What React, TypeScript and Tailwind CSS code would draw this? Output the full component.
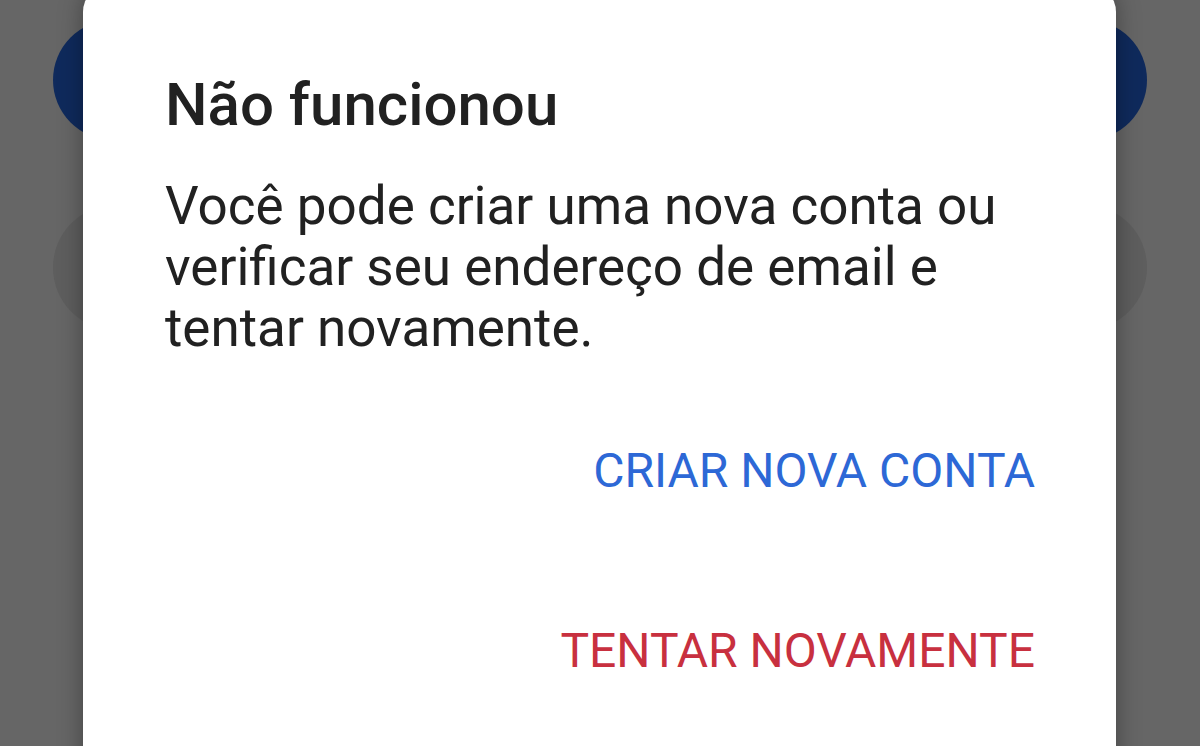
export default function App() {
  return (
    <div
      className="relative h-[746px] w-[1200px] overflow-hidden bg-[#666666]"
      style={{ fontFamily: "Roboto, 'Noto Sans', sans-serif" }}
    >
      {/* page behind the scrim */}
      <div className="flex flex-col gap-[65px] px-[53px] pt-[20px]">
        <div className="h-[120px] rounded-full bg-[#0f2a5c]" />
        <div className="h-[125px] rounded-full bg-[#5e5e5e]" />
      </div>

      {/* dialog */}
      <div className="absolute left-[83px] top-[-16px] flex h-[800px] w-[1033px] flex-col rounded-[28px] bg-white pl-[82px] pr-[81px] pt-[85px] shadow-[0_0_24px_rgba(0,0,0,0.35)]">
        <h2 className="text-[60px] font-medium leading-[72px] text-[#212121]">
          Não funcionou
        </h2>
        <p className="mt-[35px] text-[53px] leading-[61px] text-[#212121]">
          Você pode criar uma nova conta ou verificar seu endereço de email e
          tentar novamente.
        </p>
        <div className="mt-[84px] flex flex-col items-end gap-[124px]">
          <button className="text-[48px] leading-[56px] text-[#2d68d6]">
            CRIAR NOVA CONTA
          </button>
          <button className="text-[48px] leading-[56px] text-[#c8303f]">
            TENTAR NOVAMENTE
          </button>
        </div>
      </div>
    </div>
  );
}
